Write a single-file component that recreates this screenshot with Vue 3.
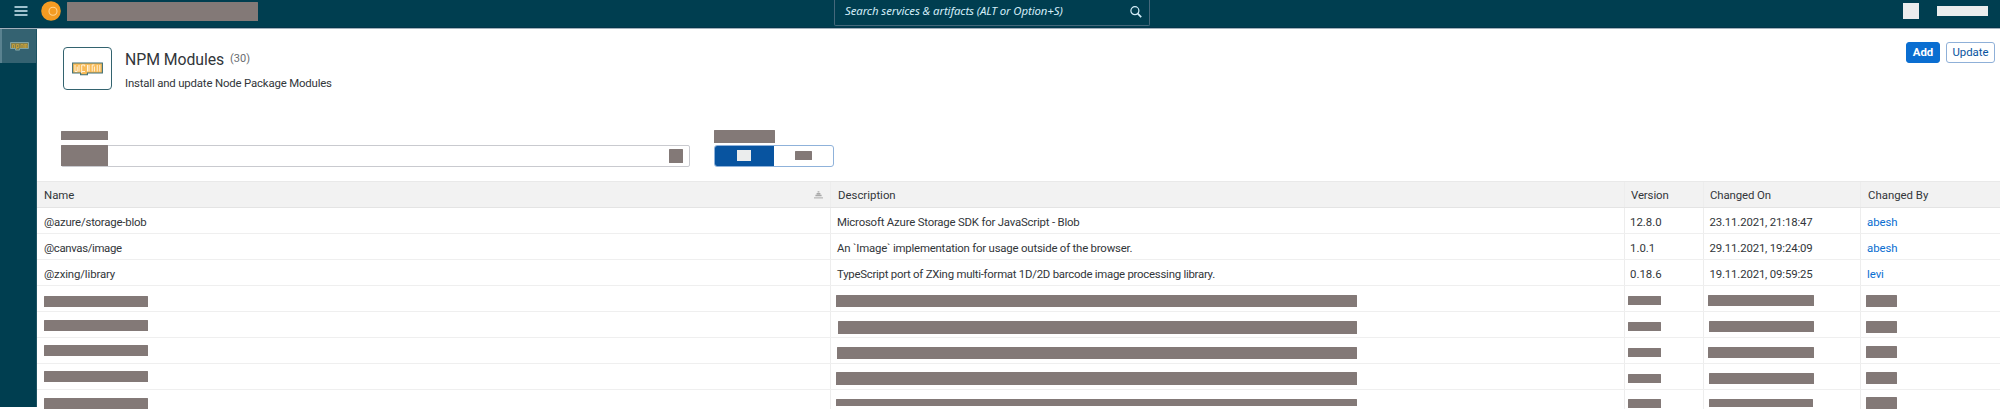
<script setup>
const columns = [
  { label: 'Name', sort: true },
  { label: 'Description' },
  { label: 'Version' },
  { label: 'Changed On' },
  { label: 'Changed By' },
]

const modules = [
  ['@azure/storage-blob', 'Microsoft Azure Storage SDK for JavaScript - Blob', '12.8.0', '23.11.2021, 21:18:47', 'abesh'],
  ['@canvas/image', 'An `Image` implementation for usage outside of the browser.', '1.0.1', '29.11.2021, 19:24:09', 'abesh'],
  ['@zxing/library', 'TypeScript port of ZXing multi-format 1D/2D barcode image processing library.', '0.18.6', '19.11.2021, 09:59:25', 'levi'],
]

// Masked cells: [left inset, top inset, width, height]
const masked = [
  [[7, 10, 104, 11], [5, 9, 521, 12], [3, 10, 33, 9], [4, 9, 106, 11], [5, 9, 31, 12]],
  [[7, 8, 104, 11], [7, 9, 519, 13], [3, 10, 33, 9], [5, 9, 105, 11], [5, 9, 31, 12]],
  [[7, 7, 104, 11], [6, 9, 520, 12], [3, 10, 33, 9], [4, 9, 106, 11], [5, 8, 31, 12]],
  [[7, 7, 104, 11], [5, 8, 521, 13], [3, 10, 33, 9], [5, 9, 105, 11], [5, 8, 31, 12]],
  [[7, 8, 104, 11], [5, 9, 521, 7], [3, 9, 33, 9], [5, 9, 104, 8], [5, 7, 31, 12]],
]

const barStyle = ([x, y, w, h]) => ({
  marginLeft: `${x}px`,
  marginTop: `${y}px`,
  width: `${w}px`,
  height: `${h}px`,
})
</script>

<template>
  <div class="app">
    <header class="shell">
      <svg class="menu" width="14" height="10" viewBox="0 0 14 10">
        <path d="M0.5 1h13M0.5 5h13M0.5 9h13" stroke="#d3edf8" stroke-width="1.6" />
      </svg>
      <svg class="logo" width="20" height="20" viewBox="0 0 20 20">
        <circle cx="10" cy="10" r="9.8" fill="#f39b22" />
        <circle cx="12" cy="10.2" r="4" fill="none" stroke="#ffd28c" stroke-width="1.1" />
      </svg>
      <span class="mask brand"></span>
      <div class="search">
        <span class="search-text">Search services &amp; artifacts (ALT or Option+S)</span>
        <svg width="12" height="12" viewBox="0 0 12 12" fill="none" stroke="#d3edf8">
          <circle cx="4.9" cy="4.7" r="4" stroke-width="1.2" />
          <path d="M7.8 7.7L11.2 11.1" stroke-width="1.7" />
        </svg>
      </div>
      <span class="light square"></span>
      <span class="light user"></span>
    </header>

    <div class="body">
      <nav class="side">
        <div class="side-item">
          <svg width="19" height="9" viewBox="0 0 19 9">
            <path d="M0.5 0.5h18v6h-9v1.6h-4v-1.6h-5z" fill="#837f4c" stroke="#7fa3a4" />
            <path d="M2.5 6V2.5h2V6M6.5 7V2.5h2.2v3H7M11 6V2.5h2V6M14.2 6V2.5H17V6M15.6 3v3" fill="none" stroke="#c7a13b" stroke-width=".9" />
          </svg>
        </div>
      </nav>

      <main class="main">
        <section class="head">
          <div class="avatar">
            <svg width="31" height="14" viewBox="0 0 31 14">
              <path d="M0.6 1h29.8v10H15.4v1.8H8.6V11h-8z" fill="#f8bb58" stroke="#3f7078" stroke-width="1.1" />
              <path d="M3 3v6.5h2.2V4.7M7 9.5V3M9.7 11V3h3v1.5M10 9.5h3M15.5 3v6.5M17 3v6.5M20.2 9.5V3h2.2M22.4 4.5v5M25.2 3v6.5M27.8 3v6.5" fill="none" stroke="#fff3dc" stroke-width="1" />
            </svg>
          </div>
          <div class="titles">
            <div class="title-line">
              <h1 class="title">NPM Modules</h1>
              <span class="count">(30)</span>
            </div>
            <p class="subtitle">Install and update Node Package Modules</p>
          </div>
          <div class="actions">
            <button class="btn primary">Add</button>
            <button class="btn">Update</button>
          </div>
        </section>

        <section class="filters">
          <div class="field">
            <span class="mask field-label"></span>
            <div class="input">
              <span class="mask input-value"></span>
              <span class="mask input-icon"></span>
            </div>
          </div>
          <div class="toggle-field">
            <span class="mask toggle-label"></span>
            <div class="toggle">
              <div class="half on"><span class="light on-mark"></span></div>
              <div class="half"><span class="mask off-mark"></span></div>
            </div>
          </div>
        </section>

        <section class="table">
          <div class="row header-row">
            <div v-for="(c, i) in columns" :key="c.label" class="cell">
              <span class="text th" :class="['h' + i]">{{ c.label }}</span>
              <svg v-if="c.sort" class="sort" width="9" height="8" viewBox="0 0 9 8">
                <path d="M3.6 0.9h1.8M2.6 2.7h3.8M1.4 4.5h6.2" stroke="#a9a9a9" stroke-width="1.4" />
                <path d="M0 6.9h9" stroke="#a9a9a9" />
              </svg>
            </div>
          </div>
          <div v-for="(m, n) in modules" :key="m[0]" class="row" :class="['r' + n]">
            <div v-for="(v, i) in m" :key="i" class="cell">
              <span class="text" :class="['c' + i]">{{ v }}</span>
            </div>
          </div>
          <div v-for="(r, n) in masked" :key="'m' + n" class="row">
            <div v-for="(b, i) in r" :key="i" class="cell">
              <span class="mask" :style="barStyle(b)"></span>
            </div>
          </div>
        </section>
      </main>
    </div>
  </div>
</template>

<style>
html, body { margin: 0; background: #fff; overflow: hidden; }
</style>

<style scoped>
* { box-sizing: border-box; }
.app {
  width: 2000px;
  height: 409px;
  overflow: hidden;
  background: #fff;
  font-family: Roboto, "Noto Sans", sans-serif;
  font-size: 11.4px;
  color: #32363a;
  white-space: nowrap;
}
.mask { display: block; flex: none; background: #837977; border-radius: 0.5px; }
.light { display: block; flex: none; background: #ebeded; }

.shell {
  display: flex;
  align-items: flex-start;
  height: 29px;
  background: #003e50;
  border-bottom: 1px solid #a2b1bc;
  box-shadow: inset 0 -1px #04354a;
}
.menu { margin: 6px 0 0 14px; }
.logo { margin: 1px 0 0 12.5px; }
.brand { width: 191px; height: 19px; margin: 2px 0 0 6.5px; }
.search {
  display: flex;
  justify-content: space-between;
  width: 316px;
  height: 26px;
  margin-left: 576px;
  padding: 6px 7px 0 10px;
  border: 1px solid #45687b;
  border-top: 0;
  border-radius: 0 0 2px 2px;
  color: #d3edf8;
}
.search-text { font-family: "Noto Sans", sans-serif; font-style: italic; font-size: 11.4px; letter-spacing: -0.09px; line-height: 16px; margin-top: -3px; }
.square { width: 16px; height: 16px; margin: 3px 0 0 753px; }
.user { width: 51px; height: 10px; margin: 6px 0 0 18px; }

.body { display: flex; height: 378px; }
.side { width: 37px; flex: none; background: #003e50; border-right: 1px solid #1d5363; }
.side-item {
  display: flex;
  align-items: center;
  justify-content: center;
  height: 34px;
  width: 36px;
  background: #346271;
  border-left: 2px solid #5a8290;
}
.main { width: 1963px; height: 380px; overflow: hidden; }

.head { display: flex; height: 99px; padding: 18px 5px 0 26px; }
.avatar {
  display: flex;
  align-items: center;
  justify-content: center;
  width: 49px;
  height: 43px;
  border: 1px solid #33636f;
  border-radius: 4px;
}
.titles { margin-left: 13px; }
.title-line { display: flex; height: 24px; }
.title { width: 98px; margin: 0; font-size: 15.8px; font-weight: 400; line-height: 26px; letter-spacing: -0.05px; }
.count { margin-left: 7px; font-size: 11px; line-height: 23px; color: #6a6d70; }
.subtitle { margin: 4px 0 0; line-height: 16px; letter-spacing: -0.17px; }
.actions { display: flex; gap: 6px; margin: -5px 0 0 auto; }
.btn {
  width: 49px;
  height: 21px;
  padding: 0;
  border: 1px solid #8fb0d8;
  border-radius: 3px;
  background: #fff;
  color: #0854a0;
  font: 11.4px/19px Roboto, sans-serif;
}
.primary { width: 34px; background: #0a6ed1; border-color: #0a6ed1; color: #fff; font-weight: 700; }

.filters { display: flex; height: 53px; padding-left: 24px; }
.field-label { width: 47px; height: 9px; margin-top: 3px; }
.input {
  display: flex;
  justify-content: space-between;
  width: 629px;
  height: 22px;
  margin-top: 5px;
  border: 1px solid #c9cacf;
  border-radius: 2px;
}
.input-value { width: 47px; height: 21px; margin: -1px 0 0 -1px; }
.input-icon { width: 14px; height: 14px; margin: 3px 6px 0 0; }
.toggle-field { margin-left: 24px; }
.toggle-label { width: 61px; height: 13px; margin-top: 2px; }
.toggle { display: flex; width: 119.5px; height: 22px; margin-top: 2px; border: 1px solid #8fb2da; border-radius: 3px; }
.half { display: flex; justify-content: center; width: 59px; border-radius: 2px; }
.on { background: #0854a0; border-radius: 2px 0 0 2px; }
.on-mark { width: 14px; height: 11px; margin-top: 4px; }
.off-mark { width: 17px; height: 9px; margin-top: 5px; }

.table { display: flex; flex-direction: column; }
.row {
  display: grid;
  grid-template-columns: 794px 794px 79px 157px 139px;
  flex: none;
  height: 26px;
  border-bottom: 1px solid #efefef;
}
.header-row { height: 27px; background: #f2f2f2; border-top: 1px solid #e9e9e9; border-bottom-color: #e4e4e4; }
.cell { display: flex; align-items: flex-start; justify-content: flex-start; border-right: 1px solid #ededed; overflow: visible; height: 25px; }
.cell:last-child { border-right: 0; }
.text { margin-left: 6px; line-height: 16px; margin-top: 6px; letter-spacing: -0.2px; }
.cell:first-child .text { margin-left: 7px; }
.text.th { margin-left: 7px; margin-top: 5px; letter-spacing: 0; }
.text.h2, .text.h3 { margin-left: 6px; letter-spacing: -0.1px; }
.c2 { margin-left: 5px; letter-spacing: 0; }
.c3 { margin-left: 5.5px; letter-spacing: -0.16px; }
.c4 { color: #0a6ed1; letter-spacing: -0.05px; }
.r1 .c0 { letter-spacing: -0.36px; }
.r2 .c0 { letter-spacing: -0.12px; }
.r2 .c1 { letter-spacing: -0.25px; }
.sort { margin: 9px 7px 0 auto; }
</style>
